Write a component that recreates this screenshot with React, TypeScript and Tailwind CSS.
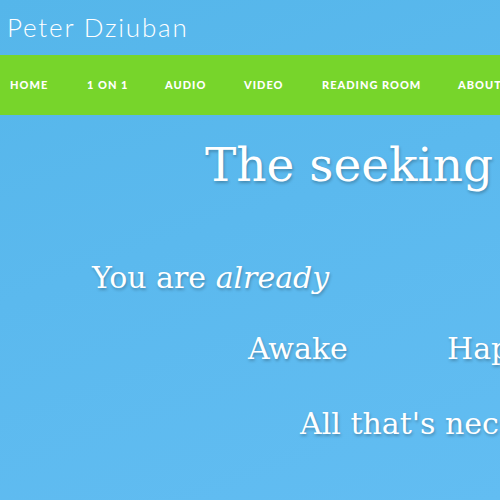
import React from "react";

const navItems = ["HOME", "1 ON 1", "AUDIO", "VIDEO", "READING ROOM", "ABOUT"];
const navLeft = ["pl-[10px]", "pl-[87px]", "pl-[165px]", "pl-[244px]", "pl-[322px]", "pl-[458px]"];

export default function App() {
  return (
    <div className="w-[500px] h-[500px] overflow-hidden relative bg-[linear-gradient(160deg,#55b6ea_0%,#5bb9ee_45%,#62bdf2_100%)]">
      <header className="h-[55px] flex items-center pl-[7px]">
        <h1 className="text-white text-[26px] tracking-[1.8px] font-['Lato',sans-serif] font-light whitespace-nowrap">
          Peter Dziuban
        </h1>
      </header>

      <nav className="h-[60px] bg-[#77d52b] relative">
        {navItems.map((item, i) => (
          <span
            key={item}
            className={"absolute top-0 h-[60px] flex items-center text-white text-[11px] font-black tracking-[1px] whitespace-nowrap font-['Lato',sans-serif] " + navLeft[i]}
          >
            {item}
          </span>
        ))}
      </nav>

      <main className="text-white font-['DejaVu_Serif',serif] [text-shadow:1px_2px_3px_rgba(0,0,0,0.25)] whitespace-nowrap">
        <h2 className="pl-[205px] pt-[18px] text-[47px] leading-[64px]">The seeking is over</h2>
        <p className="pl-[92px] pt-[61px] text-[30px] leading-[40px]">
          You are <em>already</em>
        </p>
        <div className="flex pl-[248px] pt-[31px] text-[30px] leading-[40px]">
          <span className="w-[199px] shrink-0">Awake</span>
          <span className="shrink-0">Happy</span>
        </div>
        <p className="pl-[300px] pt-[35px] text-[30px] leading-[40px]">All that's necessary</p>
      </main>
    </div>
  );
}
